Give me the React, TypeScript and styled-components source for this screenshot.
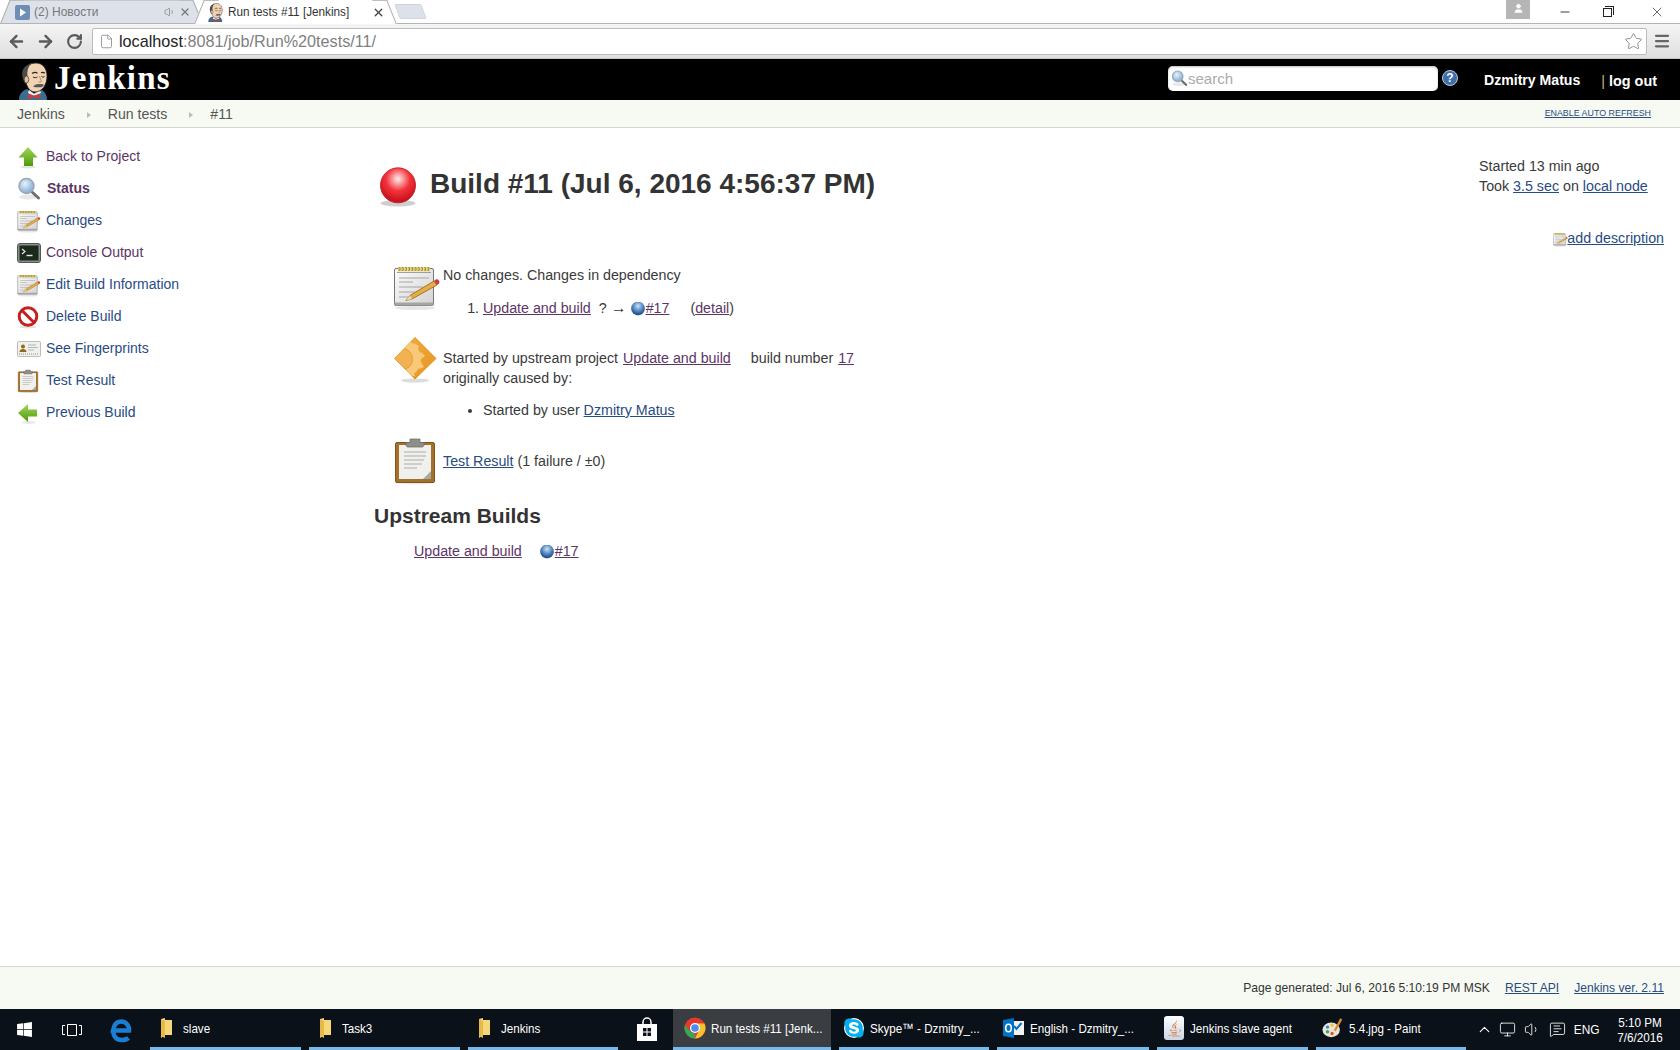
import React from "react";
import styled, { createGlobalStyle } from "styled-components";
import { ArrowLeft, ArrowRight, RotateCw, File, Star, Menu, Minus, X, ChevronUp, Volume1, MessageSquareText, Monitor, User } from "lucide-react";
import { FaWindows, FaSkype, FaJava } from "react-icons/fa";

const Global = createGlobalStyle`
  html, body { margin: 0; padding: 0; background: #fff; }
  body { font-family: "Liberation Sans", Arial, sans-serif; font-size: 14px; line-height: 1.4; color: #3a3a3a; overflow: hidden; }
  * { box-sizing: border-box; }
`;

const BLUE = "#2a4b82";
const PURPLE = "#5c3566";

const Page = styled.div`display: flex; flex-direction: column; height: 1050px; width: 1680px;`;

/* Browser chrome */
const TabStrip = styled.div`position: relative; display: flex; height: 24px; padding-left: 12px; background: #fff; border-bottom: 1px solid #b4b4b4;`;
const Tab = styled.div<{ $active?: boolean }>`
  position: relative; z-index: ${p => (p.$active ? 2 : 1)}; display: flex; align-items: center; gap: 4px; width: 179px; height: ${p => (p.$active ? 24 : 23)}px;
  margin-right: 15px; padding-left: ${p => (p.$active ? 1 : 3)}px; background: ${p => (p.$active ? "#fff" : "#dde2ea")};
  font: 12.5px "Liberation Sans", sans-serif; color: ${p => (p.$active ? "#333" : "#777")};
  ${p => (p.$active ? "" : "border-top: 1px solid #c8c8c8;")}
  &::before, &::after { content: ""; position: absolute; top: ${p => (p.$active ? 0 : -1)}px; bottom: 0; width: 14px; background: inherit; border-top: 1px solid #bdbdbd; }
  &::before { left: -7px; transform: skewX(-22deg); border-left: 1px solid #a8a8a8; }
  &::after { right: -7px; transform: skewX(22deg); border-right: 1px solid #a8a8a8; }
`;
const TabTitle = styled.span<{ $squeeze?: boolean }>`position: relative; z-index: 1; flex: 1; white-space: nowrap; transform-origin: left center; transform: scaleX(${p => (p.$squeeze ? 0.94 : 0.96)});`;
const TabIcons = styled.span`position: relative; z-index: 1; display: flex; align-items: center; gap: 3px;`;
const NewTab = styled.div`width: 27px; height: 15px; margin: 4px 0 0 -3px; background: #dde2ea; border-radius: 2px; transform: skewX(20deg); border: 1px solid #d0d4da;`;
const WindowControls = styled.div`display: flex; align-items: center; margin-left: auto; height: 23px; color: #222;`;
const Avatar = styled.div`display: flex; align-items: flex-start; justify-content: center; width: 24px; height: 19px; margin: -4px 12px 0 0; background: #b5b5b5; padding-top: 3px;`;
const WinBtn = styled.div`display: flex; align-items: center; justify-content: center; width: 46px; height: 23px;`;
const RestoreGlyph = styled.div`position: relative; width: 9px; height: 9px; margin: 2px 7px 0 0; border: 1px solid #222;
  &::after { content: ""; position: absolute; top: -3px; right: -3px; width: 8px; height: 8px; border-top: 1px solid #222; border-right: 1px solid #222; }`;

const Toolbar = styled.div`display: flex; align-items: center; height: 35px; background: linear-gradient(#f4f4f4, #dfdfdf); border-bottom: 1px solid #c4c4c4; color: #5a5a5a;`;
const NavBtn = styled.div`display: flex; align-items: center; justify-content: center; width: 29px; height: 26px;`;
const NavGroup = styled.div`display: flex; align-items: center; padding-left: 2px; width: 92px;`;
const Omnibox = styled.div`display: flex; align-items: center; width: 1555px; height: 27px; padding-left: 6px; background: #fff; border: 1px solid #bcbcbc; border-radius: 2px;`;
const Url = styled.span`margin-left: 5px; font-size: 16.2px; color: #808080;`;
const UrlHost = styled.span`color: #222;`;
const StarSlot = styled.div`display: flex; margin-left: auto; margin-right: 3px; color: #777;`;
const MenuSlot = styled.div`display: flex; margin-left: 6px; color: #666;`;

/* Jenkins header */
const Header = styled.div`display: flex; align-items: center; height: 41px; background: #000; color: #fff;`;
const LogoLink = styled.div`display: flex; align-items: flex-end; align-self: stretch; padding-left: 17px;`;
const Wordmark = styled.span`align-self: center; margin: -3px 0 0 4px; font: bold 33px/1 "Liberation Serif", serif; letter-spacing: 1.25px; color: #fff;`;
const SearchBox = styled.div`display: flex; align-items: center; width: 270px; height: 25px; margin: -3px 0 0 auto; padding-left: 3px; background: #fff; border-radius: 5px; box-shadow: inset 0 1px 2px #bbb;`;
const Placeholder = styled.span`font-size: 15px; color: #aaa;`;
const HelpDot = styled.div`display: flex; margin: -3px 0 0 4px;`;
const UserName = styled.span`margin: 3px 0 0 26px; font-weight: bold; font-size: 14.1px; color: #fff; white-space: nowrap;`;
const Logout = styled.span`margin: 3px 23px 0 21px; font-weight: bold; font-size: 14.4px; color: #fff; white-space: nowrap;
  &::before { content: "|"; font-weight: normal; color: #c9b37a; margin-right: 4px; }`;

/* Breadcrumbs */
const Breadcrumbs = styled.div`display: flex; align-items: center; height: 28px; padding: 2px 29px 0 17px; background: #f6faf2; border-bottom: 1px solid #d3d7cf;`;
const Crumb = styled.span`color: #555; font-size: 14.1px;`;
const CrumbSep = styled.span`width: 0; height: 0; margin: 0 17px 0 22px; border-left: 4px solid #bbb; border-top: 3px solid transparent; border-bottom: 3px solid transparent;`;
const AutoRefresh = styled.a`margin: -2px 0 0 auto; font-size: 8.9px; color: ${BLUE}; text-decoration: underline; text-transform: uppercase;`;

/* Main */
const Main = styled.div`flex: 1; display: flex; min-height: 0;`;
const Side = styled.nav`width: 374px; flex: none; padding: 13px 0 0 17px;`;
const SideItem = styled.div`display: flex; align-items: center; gap: 5px; height: 32px;`;
const SideIcon = styled.span`display: flex; width: 24px; height: 24px; flex: none;`;
const SideLink = styled.a<{ $visited?: boolean; $bold?: boolean }>`
  color: ${p => (p.$visited ? PURPLE : BLUE)}; font-weight: ${p => (p.$bold ? "bold" : "normal")}; ${p => (p.$bold ? "margin-left: 1px;" : "")}
`;
const Content = styled.div`flex: 1; font-size: 14.25px;`;
const TopRow = styled.div`display: flex; justify-content: space-between; align-items: flex-start;`;
const Caption = styled.h1`display: flex; align-items: center; gap: 12px; margin: 36px 0 0 4px; font-size: 28px; font-weight: bold; line-height: 40px; color: #333; white-space: nowrap;`;
const BuildInfo = styled.div`width: 201px; padding-top: 29px; line-height: 19.6px;`;
const DescRow = styled.div`display: flex; justify-content: flex-end; align-items: center; margin-top: 25px; padding-right: 16px; height: 20px;`;
const A = styled.a<{ $visited?: boolean }>`color: ${p => (p.$visited ? PURPLE : BLUE)}; text-decoration: underline;`;
const Row = styled.div<{ $top: number }>`display: flex; align-items: flex-start; margin: ${p => p.$top}px 0 0 19px;`;
const RowIcon = styled.span`display: flex; width: 50px; height: 48px; flex: none;`;
const RowText = styled.div<{ $pad?: number }>`padding-top: ${p => p.$pad ?? 0}px;`;
const Lead = styled.div`margin: 0;`;
const Ordered = styled.ol`margin: 13px 0 0; padding-left: 40px;`;
const Bullets = styled.ul`margin: 12px 0 0; padding-left: 40px;`;
const Gap = styled.span<{ $w: number }>`display: inline-block; width: ${p => p.$w}px;`;
const Arrow = styled.span`font-size: 16px; line-height: 1;`;
const BallWrap = styled.span`display: inline-block; width: 14px; height: 14px; vertical-align: -3px; margin: 0 1px 0 0;`;
const H2 = styled.h2`margin: 16px 0 0; font-size: 21px; line-height: 29px; font-weight: bold; color: #333;`;
const UpstreamRow = styled.div`margin: 12px 0 0 40px;`;

/* Footer */
const Footer = styled.footer`display: flex; justify-content: flex-end; align-items: center; gap: 15px; height: 43px; padding: 0 16px 0 0; background: #f6faf2; border-top: 1px solid #d3d7cf; font-size: 12.1px; color: #333;`;

/* Taskbar */
const Taskbar = styled.div`display: flex; height: 41px; background: #0b1118; color: #fff; font: 13.5px "Liberation Sans", sans-serif;`;
const Slot = styled.div<{ $w: number; $shift?: number }>`display: flex; align-items: center; justify-content: center; flex: none; width: ${p => p.$w}px; padding-right: ${p => p.$shift ?? 0}px;`;
const TaskBtn = styled.div<{ $active?: boolean; $w?: number; $pad?: number }>`
  display: flex; align-items: center; gap: 5px; flex: none; width: ${p => p.$w ?? 151}px; margin-right: 8px; padding-left: ${p => p.$pad ?? 6}px;
  border-bottom: 3px solid #76b9ed; background: ${p => (p.$active ? "#3a3e42" : "transparent")}; white-space: nowrap; overflow: hidden;
`;
const TaskIcon = styled.span`display: flex; align-items: center; justify-content: center; width: 22px; height: 24px; flex: none;`;
const TaskLabel = styled.span`display: inline-block; transform: scaleX(.86); transform-origin: left center;`;
const JavaTile = styled.span`display: flex; align-items: center; justify-content: center; width: 20px; height: 24px; background: linear-gradient(#fff, #c9d6e6); border-radius: 3px;`;
const SkypeBack = styled.span`display: flex; align-items: center; justify-content: center; width: 20px; height: 20px; background: #fff; border-radius: 50%;`;
const Tray = styled.div`display: flex; align-items: center; margin-left: auto; padding-right: 10px; border-right: 1px solid #333;`;
const TraySlot = styled.span<{ $w: number }>`display: flex; align-items: center; justify-content: center; width: ${p => p.$w}px;`;
const TrayText = styled.span`display: inline-block; transform: scaleX(.88);`;
const Clock = styled.div`width: 62px; text-align: center; line-height: 15px; font-size: 13px; margin-left: 5px; transform: scaleX(.9);`;
const BigBall = styled.span`display: block; width: 40px; height: 40px; flex: none; margin: 3px 0 -3px;`;
const SmallNote = styled.span`display: flex; margin-right: -1px;`;

/* Drawings */
const ButlerArt = () => (
  <>
    <path d="M2 38c0-6 3-9 8-11l7 4 8-3c3 2 5 5 5 10z" fill="#3e6c8e" />
    <path d="M12 28l5 4 6-4 1 3-7 3-6-3z" fill="#f2f2f2" />
    <path d="M11 32l6 1.500 6-1.500v5l-6-2-6 2z" fill="#d33833" />
    <path d="M8 12C8 4 13 1 19 1c7 0 11 6 11 13 0 9-5 16-12 16-6 0-10-7-10-18z" fill="#efd3b3" stroke="#2b2421" strokeWidth=".8" />
    <path d="M8.500 22C4 16 4 7 9 4c2-1.500 4-2.500 6-2.800C11 4 10 9 10.500 14c.2 3-.5 6-2 8z" fill="#4b4a4c" />
    <ellipse cx="9.500" cy="17.500" rx="2.300" ry="3.600" fill="#e6bf9a" stroke="#2b2421" strokeWidth=".6" />
    <path d="M15 11.500c2-1.300 4-1.300 5.500-.3M24 10.800c1.300-.7 2.800-.5 3.800.4" stroke="#2b2421" strokeWidth="1.300" fill="none" />
    <path d="M16 15c1.500.9 3 .9 4.500 0M24.500 14.500c1 .7 2 .7 3 0" stroke="#2b2421" strokeWidth="1" fill="none" />
    <path d="M22.500 14c.5 2.500 1.500 4 2 5.500-.8.700-2 .7-3 .3" stroke="#b4835f" strokeWidth=".9" fill="none" />
    <path d="M16 24.500c2.500-2.500 5-3 7-2.200 1.500-.6 3-.3 4 .7-1.500 2-3 2.700-5 2.200-2 .3-4 .1-6-.7z" fill="#59585a" />
  </>
);
const Butler = () => <svg width="33" height="38" viewBox="0 0 33 38"><ButlerArt /></svg>;
const Jk = () => <svg width="17" height="19" viewBox="0 0 33 38"><ButlerArt /></svg>;
const SearchIcon = ({ s = 24 }: { s?: number }) => (
  <svg width={s} height={s} viewBox="0 0 24 24">
    <defs><radialGradient id="gl" cx=".4" cy=".35" r=".7"><stop offset="0" stopColor="#e6f1fb" /><stop offset="1" stopColor="#7ca6cf" /></radialGradient></defs>
    <ellipse cx="11" cy="20" rx="9" ry="2.500" fill="#e8e8e8" />
    <path d="M14.500 14.500l7 6.500" stroke="#6f6f6f" strokeWidth="3" strokeLinecap="round" />
    <circle cx="9.500" cy="9" r="7.500" fill="url(#gl)" stroke="#9aa7b5" strokeWidth="1.500" />
  </svg>
);
const Help = () => (
  <svg width="16" height="16" viewBox="0 0 16 16">
    <circle cx="8" cy="8" r="7.500" fill="#3f6ea8" stroke="#b9cbe0" strokeWidth="1" />
    <text x="8" y="12.300" textAnchor="middle" fontFamily="Liberation Sans" fontWeight="bold" fontSize="12" fill="#fff">?</text>
  </svg>
);
const ArrowUpIcon = () => (
  <svg width="24" height="24" viewBox="0 0 24 24">
    <defs><linearGradient id="gu" x1="0" y1="0" x2="0" y2="1"><stop offset="0" stopColor="#a3d65c" /><stop offset="1" stopColor="#4e9a06" /></linearGradient></defs>
    <ellipse cx="11" cy="22" rx="8" ry="1.500" fill="#e5e5e5" />
    <path d="M11 2L1.500 12.500H7V21H16V12.500H20.500z" fill="url(#gu)" />
  </svg>
);
const ArrowLeftIcon = () => (
  <svg width="24" height="24" viewBox="0 0 24 24">
    <defs><linearGradient id="gl2" x1="0" y1="0" x2="0" y2="1"><stop offset="0" stopColor="#a3d65c" /><stop offset="1" stopColor="#4e9a06" /></linearGradient></defs>
    <ellipse cx="12" cy="21.500" rx="7" ry="1.500" fill="#e8e8e8" />
    <path d="M11 3L1 12l10 9v-5.500h9v-7h-9z" fill="url(#gl2)" />
  </svg>
);
const Notepad = ({ s = 48 }: { s?: number }) => (
  <svg width={s} height={s} viewBox="0 0 48 48">
    <defs><linearGradient id="np" x1="0" y1="0" x2="1" y2="1"><stop offset="0" stopColor="#fcfcfc" /><stop offset="1" stopColor="#d2d2d2" /></linearGradient></defs>
    <ellipse cx="22" cy="45" rx="20" ry="2" fill="#e6e6e6" />
    <rect x="1.500" y="5.500" width="39" height="37" rx="1.500" fill="url(#np)" stroke="#777" />
    <rect x="1.500" y="39.500" width="39" height="3" fill="#a5a5a5" />
    <path d="M4 9.500h34" stroke="#8a8a8a" strokeWidth=".8" />
    <rect x="5" y="4" width="32" height="4.500" fill="#efe29a" />
    <path d="M5.500 6h31" stroke="#8c7416" strokeWidth="3.600" strokeDasharray="2 1.200" opacity=".85" />
    <path d="M5.500 6h31" stroke="#f2e38a" strokeWidth="1.400" strokeDasharray="1 2.200" />
    <path d="M6 15h30M6 19h14M6 24h24M6 29h16M6 34h12" stroke="#a6a6a6" strokeWidth="1.100" />
    <path d="M13 37.500l4-5L41 18l3 4L19 36z" fill="#e6ac46" stroke="#8f6214" strokeWidth=".8" />
    <path d="M13 37.500l4-5 2 3.500z" fill="#f2d9ae" />
    <path d="M41 18l3 4 2-1.500c1.300-2-1-5-3.300-4z" fill="#cf3b35" />
  </svg>
);
const Terminal = () => (
  <svg width="24" height="24" viewBox="0 0 24 24">
    <rect x=".5" y="2.500" width="23" height="19" rx="2.500" fill="#8a8f8a" stroke="#555" />
    <rect x="2.500" y="4.500" width="19" height="15" fill="#1c2a1c" />
    <path d="M5 8l3 2.500L5 13" stroke="#e8e8e8" strokeWidth="1.200" fill="none" />
    <path d="M9.500 14.500h6" stroke="#e8e8e8" strokeWidth="1.400" />
  </svg>
);
const Prohibit = () => (
  <svg width="24" height="24" viewBox="0 0 24 24">
    <ellipse cx="11" cy="22" rx="9" ry="1.500" fill="#e2e2e2" />
    <circle cx="11" cy="11.500" r="8.800" fill="#fff" stroke="#c5201f" strokeWidth="3" />
    <path d="M5 5.500l12 12" stroke="#c5201f" strokeWidth="3" />
  </svg>
);
const Card = () => (
  <svg width="24" height="24" viewBox="0 0 24 24">
    <rect x=".5" y="4.500" width="23" height="15" rx="1" fill="#f0f0ec" stroke="#bdbdbd" />
    <circle cx="6" cy="9.500" r="2" fill="#8f6a1c" />
    <path d="M2.500 15c0-2 1.500-3 3.500-3s3.500 1 3.500 3z" fill="#8f6a1c" />
    <path d="M11 8h8M11 10.500h10M11 13h6" stroke="#b5b5b5" />
    <path d="M2 17h20" stroke="#7c9a72" strokeDasharray="1 1" />
  </svg>
);
const Clipboard = ({ s = 48 }: { s?: number }) => (
  <svg width={s} height={s} viewBox="0 0 48 48">
    <ellipse cx="22" cy="46" rx="17" ry="1.500" fill="#e8e8e8" />
    <rect x="2.500" y="5.500" width="39" height="40" rx="1.500" fill="#a4712a" stroke="#80551a" />
    <path d="M6 8h32v34h-32z" fill="#f0f0ec" />
    <path d="M30 42l8-8v8z" fill="#a8a8a8" />
    <path d="M11 15h22M11 19h22M11 23h20M11 27h18M11 31h13" stroke="#c2c2c2" strokeWidth="1.600" />
    <path d="M13 8V5.500h4V2h10v3.500h4V8c0 1-1 2-2 2H15c-1 0-2-1-2-2z" fill="#8f8f8a" stroke="#6a6a66" strokeWidth=".7" />
  </svg>
);
const Diamond = () => (
  <svg width="48" height="48" viewBox="0 0 48 48">
    <defs>
      <clipPath id="dm"><path d="M22 2.500L43 23.500 22 44 1.500 23.500z" /></clipPath>
      <linearGradient id="dg" x1="0" y1="0" x2="1" y2="1"><stop offset="0" stopColor="#f0ad45" /><stop offset="1" stopColor="#e8951f" /></linearGradient>
    </defs>
    <ellipse cx="22" cy="45.500" rx="14" ry="2" fill="#dcdcdc" />
    <path d="M22 2.500L43 23.500 22 44 1.500 23.500z" fill="url(#dg)" stroke="#e2931f" />
    <g clipPath="url(#dm)">
      <circle cx="9" cy="24" r="15" fill="none" stroke="#f7c978" strokeWidth="8" />
      <path d="M21 8l5 3-2 5-5-2zM28 17l4 4-4 3-3-3zM28 27l3 5-5 2-2-4zM20 36l2 5-6 1-1-5z" fill="#f7c978" />
      <circle cx="9" cy="24" r="10" fill="#f2b253" />
    </g>
  </svg>
);
const Ball = ({ color = "blue" }: { color?: "blue" | "red" }) => {
  const id = `ball-${color}`;
  const c = color === "red" ? ["#ffecec", "#f3333b", "#c8141e"] : ["#cfe0f2", "#5a8fcb", "#274f85"];
  return (
    <svg width="100%" height="100%" viewBox="0 0 48 48" display="block">
      <defs><radialGradient id={id} cx=".5" cy=".32" r=".62"><stop offset="0" stopColor={c[0]} /><stop offset=".55" stopColor={c[1]} /><stop offset="1" stopColor={c[2]} /></radialGradient></defs>
      {color === "red" && <ellipse cx="24" cy="43.500" rx="21" ry="4" fill="#cfcfcf" />}
      <circle cx="24" cy="22" r={color === "red" ? 21 : 23} fill={`url(#${id})`} stroke={c[2]} strokeWidth="1" />
    </svg>
  );
};
const Folder = () => (
  <svg width="14" height="22" viewBox="0 0 14 22">
    <path d="M1 2l4-1v2l7 0v15l-7 0-4 3z" fill="#f5d778" />
    <path d="M1 2l4 2v17l-4-2z" fill="#e7b84a" />
  </svg>
);
const ChromeLogo = () => (
  <svg width="22" height="22" viewBox="0 0 22 22">
    <circle cx="11" cy="11" r="10.500" fill="#e5392d" />
    <path d="M11 21.500A10.500 10.500 0 01.9 8L6 14l5 3z" fill="#35a853" />
    <path d="M11 21.500A10.500 10.500 0 0020.500 6.500H11l4 7z" fill="#fbc02d" />
    <circle cx="11" cy="11" r="5" fill="#fff" />
    <circle cx="11" cy="11" r="3.800" fill="#4b8df0" />
  </svg>
);
const Store = () => (
  <svg width="22" height="26" viewBox="0 0 22 26">
    <path d="M7 7V5a4 4 0 018 0v2" fill="none" stroke="#fff" strokeWidth="1.500" />
    <path d="M1 7h20v17H1z" fill="#fff" />
    <path d="M7 11h3.500v3.500H7zM11.500 11H15v3.500h-3.500zM7 15.500h3.500V19H7zM11.500 15.500H15V19h-3.500z" fill="#0b1118" />
  </svg>
);
const TaskView = () => (
  <svg width="20" height="16" viewBox="0 0 20 16" fill="none" stroke="#fff">
    <path d="M5.500 2.500h9v11h-9z" /><path d="M3 3.500H.5v9H3M17 3.500h2.500v9H17" />
  </svg>
);
const EdgeLogo = () => (
  <svg width="22" height="26" viewBox="0 0 22 26">
    <path d="M4 13.500h15c.4-5-3-9-8-9-4 0-7 3-8 9zM3.500 13.500c-.5 6 3 9.500 8 9.500 3 0 5.500-.7 7-2" fill="none" stroke="#1a7fd4" strokeWidth="4.500" />
  </svg>
);
const Outlook = () => (
  <svg width="22" height="22" viewBox="0 0 22 22">
    <rect x="8" y="4" width="13" height="14" fill="#f2f2f2" />
    <path d="M11 9l2.500 3 5-6" stroke="#0072c6" strokeWidth="2" fill="none" />
    <path d="M0 3l11-2v20L0 19z" fill="#0072c6" />
    <ellipse cx="5.500" cy="11" rx="2.800" ry="3.800" fill="none" stroke="#fff" strokeWidth="1.600" />
  </svg>
);
const Paint = () => (
  <svg width="24" height="24" viewBox="0 0 24 24">
    <ellipse cx="10" cy="14" rx="9.500" ry="8" fill="#e8e4da" />
    <circle cx="6" cy="11" r="1.800" fill="#3b7fd6" /><circle cx="6" cy="16" r="1.800" fill="#3aa655" />
    <circle cx="11" cy="18" r="1.800" fill="#e84d3c" /><circle cx="11" cy="9" r="1.800" fill="#f4c430" />
    <path d="M14 15l7-13" stroke="#d88b2c" strokeWidth="2.500" />
  </svg>
);
const PlayFav = () => (
  <svg width="15" height="15" viewBox="0 0 15 15">
    <rect width="15" height="15" rx="2" fill="#6d8fb3" /><path d="M5 3.500l6 4-6 4z" fill="#fff" />
  </svg>
);

const sideItems: { icon: React.ReactNode; label: string; visited?: boolean; bold?: boolean }[] = [
  { icon: <ArrowUpIcon />, label: "Back to Project", visited: true },
  { icon: <SearchIcon />, label: "Status", visited: true, bold: true },
  { icon: <Notepad s={24} />, label: "Changes" },
  { icon: <Terminal />, label: "Console Output", visited: true },
  { icon: <Notepad s={24} />, label: "Edit Build Information" },
  { icon: <Prohibit />, label: "Delete Build" },
  { icon: <Card />, label: "See Fingerprints" },
  { icon: <Clipboard s={24} />, label: "Test Result" },
  { icon: <ArrowLeftIcon />, label: "Previous Build" },
];

export default function App() {
  return (
    <Page>
      <Global />
      <TabStrip>
        <Tab>
          <TabIcons><PlayFav /></TabIcons>
          <TabTitle>(2) Новости</TabTitle>
          <TabIcons><Volume1 size={12} color="#999" /><X size={12} color="#777" strokeWidth={2.5} /></TabIcons>
        </Tab>
        <Tab $active>
          <TabIcons><Jk /></TabIcons>
          <TabTitle $squeeze>Run tests #11 [Jenkins]</TabTitle>
          <TabIcons><X size={13} color="#444" strokeWidth={2.5} /></TabIcons>
        </Tab>
        <NewTab />
        <WindowControls>
          <Avatar><User size={11} color="#fff" fill="#fff" /></Avatar>
          <WinBtn><Minus size={14} strokeWidth={1.5} /></WinBtn>
          <WinBtn><RestoreGlyph /></WinBtn>
          <WinBtn><X size={16} strokeWidth={1} /></WinBtn>
        </WindowControls>
      </TabStrip>
      <Toolbar>
        <NavGroup>
          <NavBtn><ArrowLeft size={19} strokeWidth={3} /></NavBtn>
          <NavBtn><ArrowRight size={19} strokeWidth={3} /></NavBtn>
          <NavBtn><RotateCw size={17} strokeWidth={3} /></NavBtn>
        </NavGroup>
        <Omnibox>
          <File size={15} color="#888" strokeWidth={1.3} />
          <Url><UrlHost>localhost</UrlHost>:8081/job/Run%20tests/11/</Url>
          <StarSlot><Star size={19} strokeWidth={1} /></StarSlot>
        </Omnibox>
        <MenuSlot><Menu size={18} strokeWidth={3} /></MenuSlot>
      </Toolbar>
      <Header>
        <LogoLink><Butler /><Wordmark>Jenkins</Wordmark></LogoLink>
        <SearchBox><SearchIcon s={17} /><Placeholder>search</Placeholder></SearchBox>
        <HelpDot><Help /></HelpDot>
        <UserName>Dzmitry Matus</UserName>
        <Logout>log out</Logout>
      </Header>
      <Breadcrumbs>
        <Crumb>Jenkins</Crumb><CrumbSep />
        <Crumb>Run tests</Crumb><CrumbSep />
        <Crumb>#11</Crumb>
        <AutoRefresh>Enable auto refresh</AutoRefresh>
      </Breadcrumbs>
      <Main>
        <Side>
          {sideItems.map(i => (
            <SideItem key={i.label}>
              <SideIcon>{i.icon}</SideIcon>
              <SideLink $visited={i.visited} $bold={i.bold}>{i.label}</SideLink>
            </SideItem>
          ))}
        </Side>
        <Content>
          <TopRow>
            <Caption><BigBall><Ball color="red" /></BigBall>Build #11 (Jul 6, 2016 4:56:37 PM)</Caption>
            <BuildInfo>
              Started 13 min ago<br />
              Took <A>3.5 sec</A> on <A>local node</A>
            </BuildInfo>
          </TopRow>
          <DescRow><SmallNote><Notepad s={15} /></SmallNote><A>add description</A></DescRow>
          <Row $top={14}>
            <RowIcon><Notepad /></RowIcon>
            <RowText $pad={3}>
              <Lead>No changes. Changes in dependency</Lead>
              <Ordered>
                <li><A $visited>Update and build</A><Gap $w={8} />? <Arrow>→</Arrow> <BallWrap><Ball /></BallWrap><A $visited>#17</A><Gap $w={21} />(<A $visited>detail</A>)</li>
              </Ordered>
            </RowText>
          </Row>
          <Row $top={16}>
            <RowIcon><Diamond /></RowIcon>
            <RowText $pad={14}>
              <Lead>Started by upstream project <Gap $w={1} /><A $visited>Update and build</A><Gap $w={20} />build number <Gap $w={1} /><A $visited>17</A></Lead>
              <Lead>originally caused by:</Lead>
              <Bullets><li>Started by user <A>Dzmitry Matus</A></li></Bullets>
            </RowText>
          </Row>
          <Row $top={16}>
            <RowIcon><Clipboard /></RowIcon>
            <RowText $pad={15}><A>Test Result</A> (1 failure / ±0)</RowText>
          </Row>
          <H2>Upstream Builds</H2>
          <UpstreamRow><A $visited>Update and build</A><Gap $w={18} /><BallWrap><Ball /></BallWrap><A $visited>#17</A></UpstreamRow>
        </Content>
      </Main>
      <Footer>
        <span>Page generated: Jul 6, 2016 5:10:19 PM MSK</span>
        <A>REST API</A>
        <A>Jenkins ver. 2.11</A>
      </Footer>
      <Taskbar>
        <Slot $w={48}><FaWindows size={17} /></Slot>
        <Slot $w={48}><TaskView /></Slot>
        <Slot $w={54} $shift={4}><EdgeLogo /></Slot>
        <TaskBtn><TaskIcon><Folder /></TaskIcon><TaskLabel>slave</TaskLabel></TaskBtn>
        <TaskBtn><TaskIcon><Folder /></TaskIcon><TaskLabel>Task3</TaskLabel></TaskBtn>
        <TaskBtn $w={150}><TaskIcon><Folder /></TaskIcon><TaskLabel>Jenkins</TaskLabel></TaskBtn>
        <Slot $w={47} $shift={6}><Store /></Slot>
        <TaskBtn $active $w={158} $pad={11}><TaskIcon><ChromeLogo /></TaskIcon><TaskLabel>Run tests #11 [Jenk...</TaskLabel></TaskBtn>
        <TaskBtn $w={150} $pad={4}><TaskIcon><SkypeBack><FaSkype size={22} color="#00aff0" /></SkypeBack></TaskIcon><TaskLabel>Skype™ - Dzmitry_...</TaskLabel></TaskBtn>
        <TaskBtn $w={152}><TaskIcon><Outlook /></TaskIcon><TaskLabel>English - Dzmitry_...</TaskLabel></TaskBtn>
        <TaskBtn><TaskIcon><JavaTile><FaJava size={17} color="#d9691a" /></JavaTile></TaskIcon><TaskLabel>Jenkins slave agent</TaskLabel></TaskBtn>
        <TaskBtn $w={150}><TaskIcon><Paint /></TaskIcon><TaskLabel>5.4.jpg - Paint</TaskLabel></TaskBtn>
        <Tray>
          <TraySlot $w={20}><ChevronUp size={17} strokeWidth={1.5} /></TraySlot>
          <TraySlot $w={26}><Monitor size={17} strokeWidth={1.2} /></TraySlot>
          <TraySlot $w={24}><Volume1 size={17} strokeWidth={1.2} /></TraySlot>
          <TraySlot $w={26}><MessageSquareText size={17} strokeWidth={1.2} /></TraySlot>
          <TraySlot $w={34}><TrayText>ENG</TrayText></TraySlot>
          <Clock>5:10 PM<br />7/6/2016</Clock>
        </Tray>
      </Taskbar>
    </Page>
  );
}
